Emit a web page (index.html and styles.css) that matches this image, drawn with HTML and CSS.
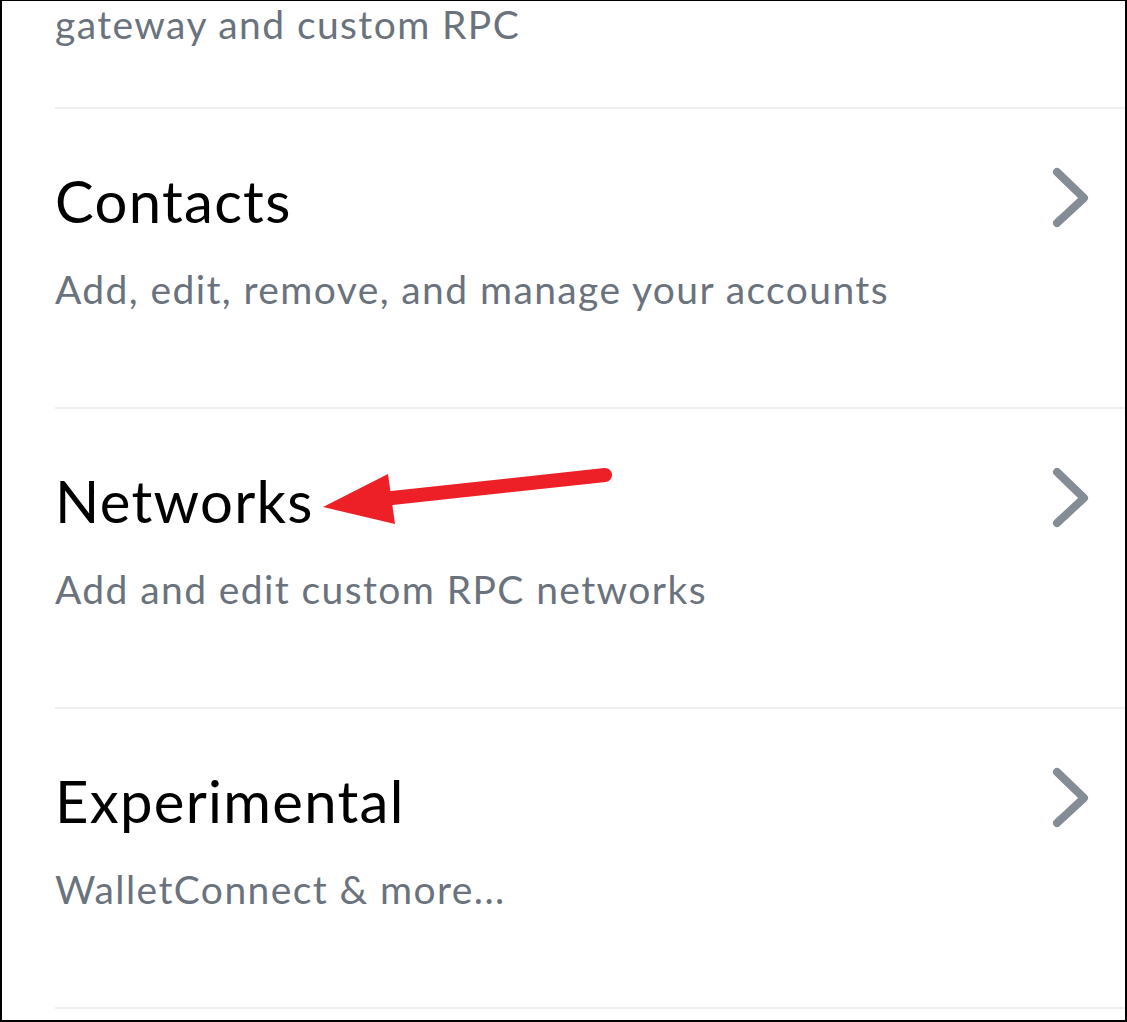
FILE: index.html
```html
<!DOCTYPE html>
<html>
<head>
  <meta charset="utf-8">
  <link rel="stylesheet" href="styles.css">
  <title>Settings</title>
</head>
<body>
  <div class="screen">
    <div class="item item-partial">
      <p class="desc">gateway and custom RPC</p>
    </div>
    <div class="item">
      <div class="row">
        <h2 class="title">Contacts</h2>
        <svg class="chevron" viewBox="0 0 44 64" width="44" height="64"><polyline points="9,6 36,32 9,57" /></svg>
      </div>
      <p class="desc">Add, edit, remove, and manage your accounts</p>
    </div>
    <div class="item">
      <div class="row">
        <h2 class="title">Networks</h2>
        <svg class="chevron" viewBox="0 0 44 64" width="44" height="64"><polyline points="9,6 36,32 9,57" /></svg>
      </div>
      <p class="desc">Add and edit custom RPC networks</p>
    </div>
    <div class="item">
      <div class="row">
        <h2 class="title">Experimental</h2>
        <svg class="chevron" viewBox="0 0 44 64" width="44" height="64"><polyline points="9,6 36,32 9,57" /></svg>
      </div>
      <p class="desc">WalletConnect &amp; more...</p>
    </div>

    <svg class="arrow" viewBox="0 0 1127 1022" width="1127" height="1022">
      <line x1="392" y1="498" x2="605" y2="475" />
      <polygon points="323,507 388,474 395,524" />
    </svg>
  </div>
</body>
</html>
```

FILE: styles.css
```css
html, body { margin: 0; padding: 0; background: #fff; }

.screen {
  position: relative;
  box-sizing: border-box;
  width: 1127px;
  height: 1022px;
  overflow: hidden;
  border: 2px solid #000;
  border-top-width: 1px;
  padding-left: 53px;
  font-family: Lato, "Noto Sans", sans-serif;
}

.item {
  box-sizing: border-box;
  height: 300px;
  padding-top: 62px;
  border-bottom: 2px solid #efefef;
}
.item-partial {
  height: 107px;
  padding-top: 0;
}

.row {
  display: flex;
  align-items: center;
  justify-content: space-between;
  height: 60px;
  padding-right: 33px;
}

.title {
  margin: 0;
  font-size: 58px;
  line-height: 60px;
  font-weight: normal;
  letter-spacing: 1.3px;
  color: #000;
}

.chevron {
  fill: none;
  stroke: #848c96;
  stroke-width: 8;
  stroke-linecap: round;
  stroke-linejoin: round;
  margin-top: -6px;
}

.desc {
  margin: 36px 0 0;
  font-size: 39px;
  line-height: 44px;
  letter-spacing: 1.4px;
  color: #6a737d;
}
.item-partial .desc { margin-top: 1px; }

.arrow {
  position: absolute;
  top: -1px;
  left: -2px;
  pointer-events: none;
}
.arrow line { stroke: #ed1f27; stroke-width: 14; stroke-linecap: round; }
.arrow polygon { fill: #ed1f27; }
```
